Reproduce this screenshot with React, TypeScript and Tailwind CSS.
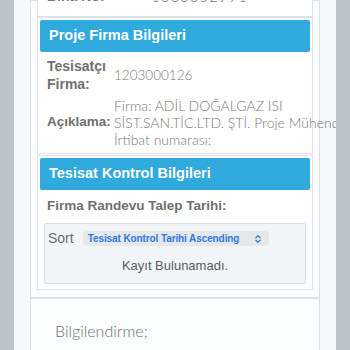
import { ChevronsUpDown } from 'lucide-react';

function Header({ title }: { title: string }) {
    return (
        <div className="h-[32px] bg-[#30a9dc] rounded-[2px] flex items-center pl-[9px]">
            <span className="text-white font-bold text-[14.5px] font-['Liberation_Sans',Arial,sans-serif]">{title}</span>
        </div>
    );
}

export default function App() {
    const helv = "font-['Liberation_Sans',Arial,sans-serif]";
    const light = "font-['Lato','Open_Sans',sans-serif] font-light";

    return (
        <div className="w-[350px] h-[350px] overflow-hidden bg-[#bbc3cb] flex">
            <div className="ml-[14px] w-[322px] h-full overflow-hidden bg-[#f4f8fb] pl-[16px]">
                <div className="w-[290px] border border-[#dae1e7] bg-[#fbfcfd] px-[6px]">
                    {/* Bina card, mostly scrolled out of view */}
                    <div className="-mt-[13px] border border-t-0 border-[#dde3e8] bg-white h-[29px] flex items-start pl-[9px]">
                        <span className={`${helv} font-bold text-[14px] text-[#777] leading-[17px] w-[104px]`}>Bina No:</span>
                        <span className={`${light} text-[15px] text-[#777] leading-[17px] tracking-[1px]`}>1000052791</span>
                    </div>

                    {/* Proje Firma */}
                    <div className="border border-[#dde3e8] bg-white p-[2px] pb-[5px]">
                        <Header title="Proje Firma Bilgileri" />
                        <div className="grid grid-cols-[67px_1fr] items-center pl-[7px] pt-[6px] gap-y-[4px]">
                            <div className={`${helv} font-bold text-[14px] text-[#707070] leading-[17.5px]`}>
                                Tesisatçı<br />Firma:
                            </div>
                            <div className={`${light} text-[13.5px] text-[#7a7a7a]`}>1203000126</div>
                            <div className={`${helv} font-bold text-[13.5px] text-[#707070]`}>Açıklama:</div>
                            <div className={`${light} text-[14px] text-[#7a7a7a] leading-[17px] whitespace-nowrap`}>
                                <div>Firma: ADİL DOĞALGAZ ISI</div>
                                <div>SİST.SAN.TİC.LTD. ŞTİ. Proje Mühendisi:</div>
                                <div>İrtibat numarası:</div>
                            </div>
                        </div>
                    </div>

                    {/* Tesisat Kontrol */}
                    <div className="mt-[1px] border border-[#dde3e8] bg-white p-[2px] pb-[5px]">
                        <Header title="Tesisat Kontrol Bilgileri" />
                        <div className={`${helv} font-bold text-[13.5px] text-[#707070] pl-[7px] pt-[7px] leading-[18px]`}>
                            Firma Randevu Talep Tarihi:
                        </div>
                        <div className="mt-[8px] mx-[4px] border border-[#d9dfe5] bg-[#f2f5f8] rounded-[2px] h-[61px] px-[3px] pt-[4px]">
                            <div className="flex items-center gap-[9px]">
                                <span className={`${helv} text-[14px] text-[#6b6b6b]`}>Sort</span>
                                <div className="w-[186px] h-[15px] bg-[#e6e7ea] rounded-[3px] flex items-center justify-between pl-[5px] pr-[6px]">
                                    <span className={`${helv} text-[10px] text-[#2f78e0] font-bold whitespace-nowrap tracking-[-0.1px]`}>Tesisat Kontrol Tarihi Ascending</span>
                                    <ChevronsUpDown className="w-[10px] h-[10px] text-[#2f78e0]" strokeWidth={3} />
                                </div>
                            </div>
                            <div className={`${helv} text-[13px] text-[#5a5a5a] text-center mt-[7px]`}>Kayıt Bulunamadı.</div>
                        </div>
                    </div>
                    <div className="h-[7px]" />
                </div>

                {/* Bilgilendirme */}
                <div className="w-[290px] h-[80px] border border-[#dae1e7] bg-[#fbfcfd] pl-[24px] pt-[20px]">
                    <span className={`${light} text-[16px] text-[#6e6e6e]`}>Bilgilendirme;</span>
                </div>
            </div>
        </div>
    );
}
